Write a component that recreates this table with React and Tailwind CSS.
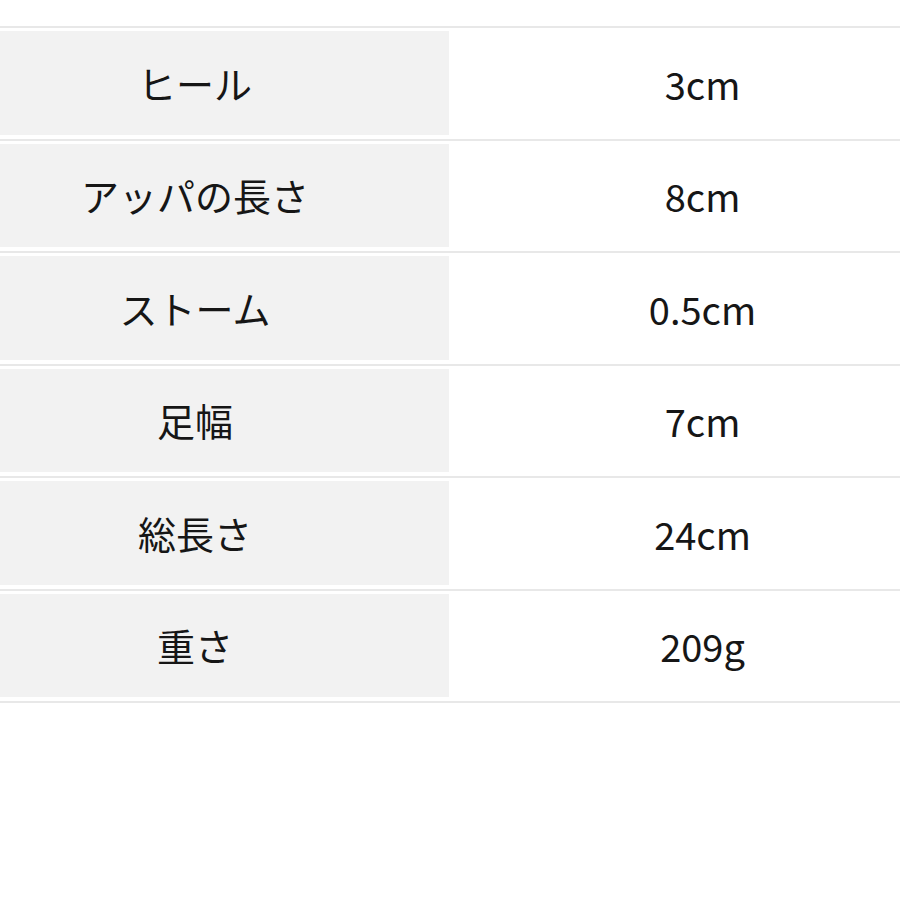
import React from 'react';

const rows = [
  ['ヒール', '3cm'],
  ['アッパの長さ', '8cm'],
  ['ストーム', '0.5cm'],
  ['足幅', '7cm'],
  ['総長さ', '24cm'],
  ['重さ', '209g'],
];

const App = () => {
  return (
    <div
      className="w-[900px] h-[900px] bg-white pt-[26px] text-[#161616]"
      style={{ fontFamily: '"Noto Sans CJK JP", "Noto Sans", sans-serif' }}
    >
      <div className="border-b-2 border-[#e8e8e8]">
        {rows.map(([label, value]) => (
          <div key={label} className="flex h-[112.5px] border-t-2 border-[#e8e8e8] pt-[3px] pb-[4px]">
            <div className="w-[449px] bg-[#f2f2f2] flex items-center justify-center pr-[59px]">
              <span className="text-[38px] leading-none">{label}</span>
            </div>
            <div className="flex-1 flex items-center justify-center pl-[56px] pt-[2px]">
              <span className="text-[38px] leading-none">{value}</span>
            </div>
          </div>
        ))}
      </div>
    </div>
  );
};

export default App;
